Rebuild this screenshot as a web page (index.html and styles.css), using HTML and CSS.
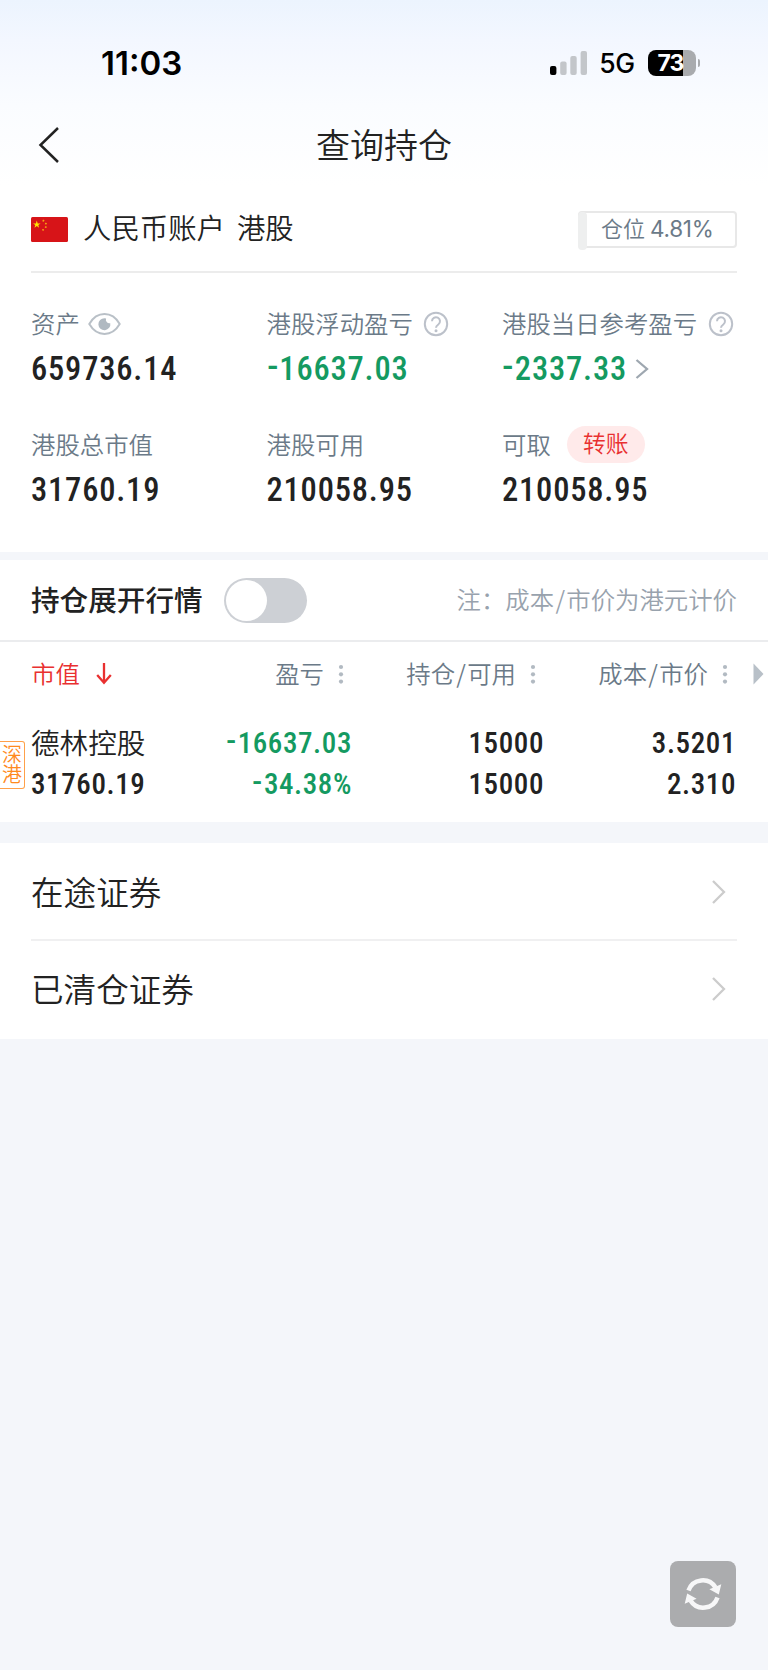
FILE: index.html
```html
<!DOCTYPE html>
<html lang="zh-CN">
<head>
<meta charset="utf-8">
<title>查询持仓</title>
<link rel="stylesheet" href="styles.css">
</head>
<body>
<header class="top">
  <div class="status">
    <span class="clock">11:03</span>
    <div class="status-right">
      <svg class="signal" width="38" height="24" viewBox="0 0 38 24"><rect x="0" y="15" width="6.4" height="9" rx="2"/><g fill="#c3c6ca"><rect x="10.2" y="10.5" width="6.4" height="13.5" rx="2"/><rect x="20.3" y="5" width="6.4" height="19" rx="2"/><rect x="30.6" y="0" width="6.4" height="24" rx="2"/></g></svg>
      <span class="net">5G</span>
      <div class="battery"><span class="level">73</span></div>
      <span class="nub"></span>
    </div>
  </div>
  <div class="nav">
    <svg class="back" width="22" height="38" viewBox="0 0 22 38"><path d="M20 2 2.5 19 20 36" fill="none" stroke="#222" stroke-width="2.5"/></svg>
    <h1 class="title">查询持仓</h1>
  </div>
</header>

<section class="account">
  <div class="account-head">
    <svg class="flag" width="37" height="25" viewBox="0 0 37 25"><rect width="37" height="25" rx="1.5" fill="#d71418"/><path d="M5.8 3.6 6.7 6.4H9.6L7.3 8.1 8.1 10.8 5.8 9.1 3.5 10.8 4.3 8.1 2 6.4H4.9Z" fill="#ffe600"/><g fill="#f7a313"><path d="m12 2.6 1.5.6-.6 1.6-1.7-.6zM14.2 5.8l1.8.2-.6 1.6-1.6-.4zM14 9.3l1.8.3-.4 1.5-1.6-.3zM11.3 11.9l1.7.3-.2 1.6-1.6-.2z"/></g></svg>
    <span class="account-name">人民币账户</span><span class="account-market">港股</span>
    <div class="ratio"><span class="ratio-fill"></span><span class="ratio-label">仓位</span><span class="ratio-value">4.81%</span></div>
  </div>
  <div class="metrics">
    <div class="metric">
      <div class="label"><span class="cap">资产</span><svg class="eye" width="33" height="22" viewBox="0 0 33 22"><path d="M1.3 11C9-2.2 24-2.2 31.7 11 24 24.2 9 24.2 1.3 11Z" fill="none" stroke="#b9c0c7" stroke-width="2"/><path d="M16.5 5.2a6 6 0 1 0 5.8 5 3.6 3.6 0 0 1-4.2-4.800z" fill="#b0b9c1"/></svg></div>
      <div class="value">659736.14</div>
    </div>
    <div class="metric">
      <div class="label"><span class="cap">港股浮动盈亏</span><svg class="help" width="26" height="26" viewBox="0 0 26 26"><circle cx="13" cy="13" r="11.2"/><path d="M9 10.300a4 4 0 1 1 6.3 3.2c-1.7 1.2-2.3 1.7-2.3 3.2"/><circle class="dot" cx="13" cy="19.8" r="1.5"/></svg></div>
      <div class="value green"><span class="minus">-</span>16637.03</div>
    </div>
    <div class="metric">
      <div class="label"><span class="cap">港股当日参考盈亏</span><svg class="help" width="26" height="26" viewBox="0 0 26 26"><circle cx="13" cy="13" r="11.2"/><path d="M9 10.300a4 4 0 1 1 6.3 3.2c-1.7 1.2-2.3 1.7-2.3 3.2"/><circle class="dot" cx="13" cy="19.8" r="1.5"/></svg></div>
      <div class="value green"><span class="minus">-</span>2337.33<svg class="more" width="14" height="22" viewBox="0 0 14 22"><path d="m1.5 2 10.500 9-10.500 9" fill="none" stroke="#9ea7b0" stroke-width="2.3"/></svg></div>
    </div>
    <div class="metric">
      <div class="label"><span class="cap">港股总市值</span></div>
      <div class="value">31760.19</div>
    </div>
    <div class="metric">
      <div class="label"><span class="cap">港股可用</span></div>
      <div class="value">210058.95</div>
    </div>
    <div class="metric">
      <div class="label"><span class="cap">可取</span><span class="transfer">转账</span></div>
      <div class="value">210058.95</div>
    </div>
  </div>
</section>

<section class="holdings">
  <div class="toolbar">
    <span class="toolbar-title">持仓展开行情</span>
    <span class="switch"><span class="knob"></span></span>
    <span class="note">注：成本<span class="slash">/</span>市价为港元计价</span>
  </div>
  <div class="row thead">
    <span class="cell first"><span class="cap">市值</span><svg class="sort" width="16" height="22" viewBox="0 0 16 22"><path d="M8 0v19.5M1.2 12 8 19.8 14.8 12" fill="none" stroke="#e93030" stroke-width="2.3"/></svg></span>
    <span class="cell"><span class="cap">盈亏</span><svg class="dots" width="6" height="20"><circle cx="3" cy="3" r="2.1"/><circle cx="3" cy="10.3" r="2.1"/><circle cx="3" cy="17.6" r="2.1"/></svg></span>
    <span class="cell"><span class="cap">持仓<span class="slash">/</span>可用</span><svg class="dots" width="6" height="20"><circle cx="3" cy="3" r="2.1"/><circle cx="3" cy="10.3" r="2.1"/><circle cx="3" cy="17.6" r="2.1"/></svg></span>
    <span class="cell"><span class="cap">成本<span class="slash">/</span>市价</span><svg class="dots" width="6" height="20"><circle cx="3" cy="3" r="2.1"/><circle cx="3" cy="10.3" r="2.1"/><circle cx="3" cy="17.6" r="2.1"/></svg></span>
    <svg class="scroll" width="11" height="22" viewBox="0 0 11 22"><path d="M.5.5 10.500 11 .5 21.500z" fill="#b8c0c8"/></svg>
  </div>
  <div class="stock">
    <span class="badge">深港</span>
    <div class="row">
      <span class="name">德林控股</span><span class="num green"><span class="minus">-</span>16637.03</span><span class="num">15000</span><span class="num">3.5201</span>
    </div>
    <div class="row">
      <span class="num first">31760.19</span><span class="num green"><span class="minus">-</span>34.38%</span><span class="num">15000</span><span class="num">2.310</span>
    </div>
  </div>
</section>

<nav class="links">
  <a class="link"><span class="link-text">在途证券</span><svg width="15" height="26" viewBox="0 0 15 26"><path d="M2 2 13 13 2 24" fill="none" stroke="#ccc" stroke-width="2.3"/></svg></a>
  <a class="link"><span class="link-text">已清仓证券</span><svg width="15" height="26" viewBox="0 0 15 26"><path d="M2 2 13 13 2 24" fill="none" stroke="#ccc" stroke-width="2.3"/></svg></a>
</nav>

<button class="refresh" aria-label="刷新"><svg width="38" height="36" viewBox="0 0 38 36"><g fill="none" stroke="#f7f7f8" stroke-width="4.5"><path d="M4.5 14.500A15 15 0 0 1 31.5 11.500"/><path d="M33.5 21.500A15 15 0 0 1 6.5 24.500"/></g><path d="M37.3 8.2 34.8 18.6 25.4 13.200zM.7 27.8 3.2 17.4 12.6 22.800z" fill="#f7f7f8"/></svg></button>
</body>
</html>
```
FILE: styles.css
```css
* { box-sizing: border-box; }
body {
  margin: 0;
  width: 768px;
  height: 1670px;
  background: #f4f6fa;
  color: #222;
  font-family: "Noto Sans CJK SC", sans-serif;
  font-weight: 350;
}
svg { display: block; flex: none; }

.top {
  height: 190px;
  background: linear-gradient(#ecf4fe 0, #f3f7ff 40px, #fafcff 105px, #fff 185px);
}
.status {
  display: flex;
  justify-content: space-between;
  align-items: center;
  height: 125px;
  padding: 0 68px 0 101px;
}
.clock { padding-top: 1px; font: 600 33px/40px Inter, sans-serif; color: #000; }
.status-right { display: flex; align-items: center; color: #000; }
.net { margin-left: 11px; font: 500 26.5px/40px Inter, sans-serif; letter-spacing: -0.5px; }
.battery {
  width: 48px;
  height: 26px;
  margin-left: 13px;
  border-radius: 8px;
  background: linear-gradient(90deg, #000 35px, #a9abae 35px);
}
.level { display: block; padding-left: 10px; font: 700 23px/26px Inter, sans-serif; letter-spacing: -1px; color: #fff; }
.nub { width: 2.5px; height: 8px; margin-left: 2px; border-radius: 0 4px 4px 0; background: #a9abae; }
.nav { display: grid; grid-template-columns: 84px 1fr 84px; align-items: center; height: 40px; }
.back { margin-left: 38px; }
.title { margin: 0; text-align: center; font-size: 34px; font-weight: 350; line-height: 38px; padding-bottom: 2px; }

.account { height: 362px; padding: 0 31px; background: #fff; }
.account-head { display: flex; align-items: center; height: 83px; padding-bottom: 3px; border-bottom: 2px solid #ececec; }
.account-name, .account-market { padding-bottom: 4px; font-size: 28.4px; line-height: 36px; }
.account-name { margin-left: 15px; }
.account-market { margin-left: 12px; }
.ratio {
  position: relative;
  display: flex;
  align-items: center;
  width: 159px;
  height: 37px;
  margin-left: auto;
  padding-left: 21px;
  border: 2px solid #e8e8e8;
  border-radius: 4px;
  color: #6b7a88;
}
.ratio-fill { position: absolute; left: -2px; top: -1px; width: 9px; height: 38px; border-radius: 4px; background: #eeefef; }
.ratio-label { padding-bottom: 4px; font-size: 22px; line-height: 30px; }
.ratio-value { margin-left: 5px; font: 400 22.5px/30px Inter, sans-serif; letter-spacing: -0.3px; }

.metrics { display: grid; grid-template-columns: 235.5px 235.5px 1fr; grid-auto-rows: 120.5px; padding-top: 33px; }
.label { display: flex; align-items: center; height: 36px; white-space: nowrap; font-size: 24.4px; color: #6b7a88; }
.cap { padding-bottom: 3px; }
.eye { margin-left: 8px; }
.help { margin-left: 10.5px; fill: none; stroke: #bcc1ca; stroke-width: 2; }
.help .dot { fill: #bcc1ca; stroke: none; }
.value { display: flex; align-items: center; height: 54px; font: 500 32.5px/54px Roboto, sans-serif; font-stretch: 85%; letter-spacing: 0.8px; }
.minus { display: inline-block; margin-right: 2px; transform: translateY(-2px) scaleX(1.15); transform-origin: left; }
.more { margin-left: 8px; }
.green { color: #149a61; }
.transfer { width: 78px; height: 37px; margin-left: 16px; border-radius: 19px; background: #ffeaea; color: #e93030; font-size: 22.8px; line-height: 34px; text-align: center; }

.holdings { height: 262px; margin-top: 8px; background: #fff; }
.toolbar { display: flex; align-items: center; height: 82px; padding: 0 31px; border-bottom: 2px solid #ebecee; }
.toolbar-title { padding-bottom: 4px; font-size: 28.6px; font-weight: 500; }
.switch { width: 83px; height: 45px; margin-left: 21px; padding: 2px; border-radius: 23px; background: #cdd0d5; }
.knob { display: block; width: 41px; height: 41px; border-radius: 50%; background: #fff; }
.note { margin-left: auto; padding-bottom: 4px; font-size: 24.4px; color: #98a2ad; }
.slash { padding: 0 1.3px; }
.row { display: grid; grid-template-columns: 160px 161px 192px 192px 1fr; align-items: center; height: 41px; padding-left: 31px; }
.thead { height: 64px; }
.cell { display: flex; align-items: center; justify-content: flex-end; padding-right: 8px; white-space: nowrap; font-size: 24.4px; color: #6b7a88; }
.cell.first { justify-content: flex-start; padding: 0; color: #e93030; }
.sort { margin-left: 16px; }
.dots { margin-left: 14px; fill: #b2bac2; }
.scroll { margin-left: 17px; }
.stock { position: relative; padding-top: 17px; }
.name { padding-bottom: 4px; font-size: 28.6px; line-height: 37px; white-space: nowrap; }
.num { font: 500 29px/41px Roboto, sans-serif; font-stretch: 85%; text-align: right; letter-spacing: 0.6px; }
.num.first { text-align: left; }
.badge {
  position: absolute;
  left: 0;
  top: 35px;
  width: 25px;
  height: 48px;
  padding: 2px 2px;
  border: 1.5px solid #ffa04a;
  border-left: 0;
  border-radius: 0 3px 3px 0;
  font-size: 20px;
  line-height: 20px;
  color: #ff8a1e;
}

.links { margin-top: 21px; padding: 0 31px; background: #fff; }
.link { display: flex; justify-content: space-between; align-items: center; height: 98px; padding-right: 11px; font-size: 32.6px; }
.link:first-child { height: 96px; padding-top: 2px; }
.link + .link { height: 100px; border-top: 2px solid #f0f0f1; padding-bottom: 2px; }
.link-text { padding-bottom: 4px; }

.refresh {
  position: absolute;
  left: 669.5px;
  top: 1561px;
  display: flex;
  align-items: center;
  justify-content: center;
  width: 66px;
  height: 66px;
  padding: 0;
  border: 0;
  border-radius: 8px;
  background: #abacae;
}
```
